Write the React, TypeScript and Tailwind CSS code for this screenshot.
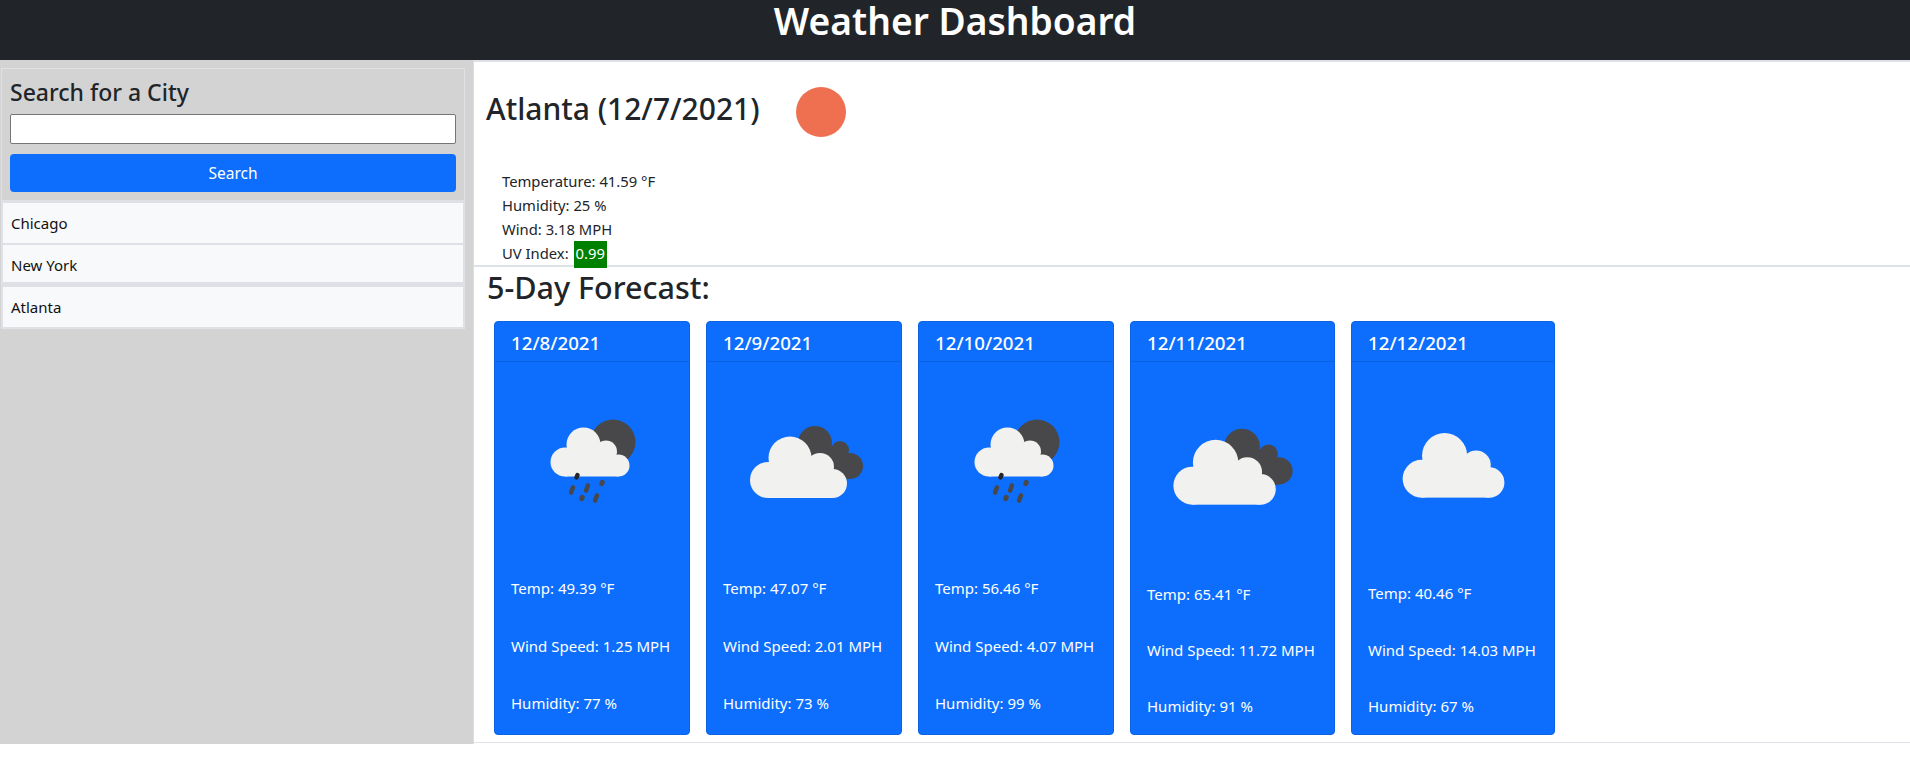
import React from "react";

const font = { fontFamily: '"Noto Sans", "Open Sans", sans-serif' };

function Cloud({ dx = 0, dy = 0, kind }: { dx?: number; dy?: number; kind: "big" | "small" }) {
  const c =
    kind === "big"
      ? [
          [48, 102, 18],
          [70, 80, 21.5],
          [100, 89, 14],
          [112.5, 105.5, 14.5],
        ]
      : [
          [54.5, 84.5, 14.5],
          [73, 67, 17],
          [95.5, 74, 11],
          [108, 88, 11],
        ];
  const r = kind === "big" ? [48, 96, 64.5, 24] : [54.5, 80, 53.5, 19];
  const m = kind === "big" ? [62, 84, 40, 20] : [65, 68, 32, 20];
  return (
    <g transform={`translate(${dx} ${dy})`} fill="#f1f1f0">
      {c.map(([x, y, rr], i) => (
        <circle key={i} cx={x} cy={y} r={rr} />
      ))}
      <rect x={r[0]} y={r[1]} width={r[2]} height={r[3]} />
      <rect x={m[0]} y={m[1]} width={m[2]} height={m[3]} />
    </g>
  );
}

function RainIcon() {
  const drops: [number, number, number, number][] = [
    [61, 112, 2.6, 4.5],
    [76, 110, 2.6, 4.5],
    [91, 105, 0.6, 5],
    [71, 120, 0.6, 5],
    [85, 120, 2.6, 4.5],
  ];
  return (
    <svg viewBox="0 0 162 162" className="block w-full aspect-square">
      <circle cx="102" cy="64" r="22.5" fill="#48484a" />
      <Cloud kind="small" dx={-0.5} dy={-0.5} />
      {drops.map(([x, y, l, w], i) => (
        <line key={i} x1={x + l * 0.35} y1={y - l} x2={x - l * 0.35} y2={y + l} stroke="#48484a" strokeWidth={w} strokeLinecap="round" />
      ))}
      <line x1="66.5" y1="97" x2="65.5" y2="99.5" stroke="#26262a" strokeWidth="4.5" strokeLinecap="round" />
    </svg>
  );
}

function CloudsIcon({ dx = 0 }: { dx?: number }) {
  return (
    <svg viewBox="0 0 162 162" className="block w-full aspect-square">
      <g transform={`translate(${dx} 0)`}>
        <circle cx="95" cy="65" r="17" fill="#48484a" />
        <circle cx="120" cy="72" r="9" fill="#48484a" />
        <circle cx="130" cy="88" r="13" fill="#48484a" />
        <rect x="95" y="68" width="28" height="30" fill="#48484a" />
        <rect x="105" y="80" width="25" height="21" fill="#48484a" />
        <Cloud kind="big" />
      </g>
    </svg>
  );
}

function SingleCloudIcon() {
  return (
    <svg viewBox="0 0 162 162" className="block w-full aspect-square">
      <Cloud kind="big" dx={3} dy={-6} />
    </svg>
  );
}

const days = [
  { date: "12/8/2021", icon: <RainIcon />, temp: "49.39", wind: "1.25", hum: "77", w: "w-[196px]", gap: "pt-[36px] pb-[3px]" },
  { date: "12/9/2021", icon: <CloudsIcon dx={-3} />, temp: "47.07", wind: "2.01", hum: "73", w: "w-[196px]", gap: "pt-[36px] pb-[3px]" },
  { date: "12/10/2021", icon: <RainIcon />, temp: "56.46", wind: "4.07", hum: "99", w: "w-[196px]", gap: "pt-[36px] pb-[3px]" },
  { date: "12/11/2021", icon: <CloudsIcon dx={-5} />, temp: "65.41", wind: "11.72", hum: "91", w: "w-[205px]", gap: "pt-[33px] pb-0" },
  { date: "12/12/2021", icon: <SingleCloudIcon />, temp: "40.46", wind: "14.03", hum: "67", w: "w-[204px]", gap: "pt-[33px] pb-0" },
];

const cities = [
  { name: "Chicago", cls: "h-[40px]" },
  { name: "New York", cls: "h-[37px] mt-[2px] pt-[4px]" },
  { name: "Atlanta", cls: "h-[40px] mt-[5px]" },
];

export default function App() {
  return (
    <div style={font} className="min-h-[777px] bg-white text-[#212529]">
      <header className="h-[60px] bg-[#212529] text-center text-white text-[37.2px] leading-[42px] font-semibold">
        Weather Dashboard
      </header>
      <div className="flex">
        <aside className="w-[474px] h-[684px] shrink-0 bg-[#d3d3d3] pt-[8px] pl-[1px] pr-[8px] border-r border-[#dedede]">
          <div className="h-[132px] border border-b-0 border-[#dee2e6] px-[8px] pt-[9px]">
            <h2 className="text-[23px] leading-[29px] font-medium">Search for a City</h2>
            <input className="block mt-[7px] w-[446px] h-[30px] bg-white border border-[#767676] rounded-[2px]" />
            <button className="block mt-[10px] w-[446px] h-[38px] pt-[1px] bg-[#0d6efd] text-white text-[15.5px] rounded-[4px]">
              Search
            </button>
          </div>
          <div className="border-x border-b border-[#dee2e6] bg-[#dee0e6] px-[1px] pt-[3px] pb-[1px]">
            {cities.map((c) => (
              <div key={c.name} className={`${c.cls} bg-[#f8f9fa] px-[8px] flex items-center text-[15px] text-[#111]`}>
                {c.name}
              </div>
            ))}
          </div>
        </aside>
        <main className="flex-1 h-[683px] border-b border-[#dee2e6]">
          <section className="h-[207px] border-t-2 border-b-2 border-[#dee2e6]">
            <div className="flex items-center h-[94px] pl-[12px]">
              <h1 className="w-[310px] text-[30px] leading-[38px] font-medium">Atlanta (12/7/2021)</h1>
              <div className="w-[50px] h-[50px] rounded-full bg-[#ee7050] mt-[6px]" />
            </div>
            <div className="pl-[28px] pt-[13px] text-[14.8px] leading-[24px]">
              <div>Temperature: 41.59 °F</div>
              <div>Humidity: 25 %</div>
              <div>Wind: 3.18 MPH</div>
              <div>
                UV Index: <span className="inline-block ml-[1px] h-[27px] bg-[#008000] text-white px-[2px] align-top">0.99</span>
              </div>
            </div>
          </section>
          <h2 className="pl-[13px] pt-[1px] text-[30.5px] leading-[38px] font-medium">5-Day Forecast:</h2>
          <div className="flex gap-[16px] pl-[20px] pt-[15px]">
            {days.map((d) => (
              <div key={d.date} className={`${d.w} h-[414px] shrink-0 flex flex-col bg-[#0d6efd] text-white rounded-[4px] border border-[#0c63e4]`}>
                <div className="h-[40px] shrink-0 px-[16px] pt-[3px] flex items-center border-b border-[#0c61de] text-[18.7px] font-medium">{d.date}</div>
                <div className="flex-1 flex flex-col p-[16px] text-[15px] leading-[24px]">
                  {d.icon}
                  <div className={`flex-1 flex flex-col justify-between ${d.gap}`}>
                    <p>Temp: {d.temp} °F</p>
                    <p>Wind Speed: {d.wind} MPH</p>
                    <p>Humidity: {d.hum} %</p>
                  </div>
                </div>
              </div>
            ))}
          </div>
        </main>
      </div>
    </div>
  );
}
